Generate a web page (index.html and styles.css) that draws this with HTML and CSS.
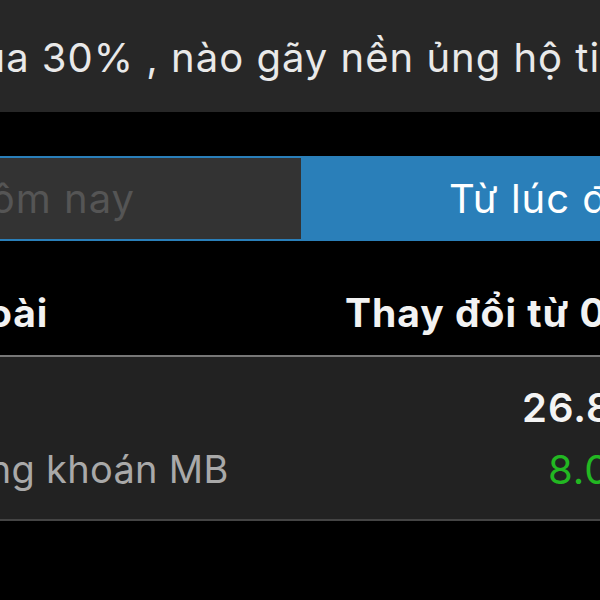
FILE: index.html
```html
<!DOCTYPE html>
<html>
<head>
  <title>Cổ phiếu</title>
  <link rel="stylesheet" href="styles.css">
</head>
<body>
  <div class="screen">
    <div class="notice">
      <span class="notice-text">qua 30% , nào gãy nền ủng hộ tiếp</span>
    </div>

    <div class="segments">
      <div class="segment segment-off"><span class="seg-text-left">Hôm nay</span></div>
      <div class="segment segment-on"><span class="seg-text-right">Từ lúc đầu</span></div>
    </div>

    <div class="table-head">
      <span class="head-left">ngoài</span>
      <span class="head-right">Thay đổi từ 0</span>
    </div>

    <div class="row">
      <div class="row-line">
        <span class="row-name"></span>
        <span class="row-value">26.800</span>
      </div>
      <div class="row-line">
        <span class="row-sub">Chứng khoán MB</span>
        <span class="row-change">8.000</span>
      </div>
    </div>
  </div>
</body>
</html>
```

FILE: styles.css
```css
/* Màn hình chi tiết cổ phiếu (dark mode) */

body {
  margin: 0;
  background-color: #000;
  font-family: Inter, "Noto Sans", sans-serif;
  letter-spacing: 1px;
  overflow: hidden;
}

.screen {
  width: 600px;
  height: 600px;
  overflow: hidden;
}

.notice {
  height: 112px;
  background-color: #272727;
  color: #e9e9e9;
  font-size: 40px;
  line-height: 116px;
  white-space: nowrap;
  overflow: hidden;
}

.notice-text {
  margin-left: -44px;
}

.segments {
  display: flex;
  margin-top: 44px;
  height: 81px;
  border-top: 2px solid #2a7fb9;
  border-bottom: 2px solid #2a7fb9;
  background-color: #2a7fb9;
  overflow: hidden;
}

.segment {
  font-size: 40px;
  line-height: 81px;
  white-space: nowrap;
  overflow: hidden;
}

.segment-off {
  width: 301px;
  background-color: #333333;
  color: #555555;
}

.segment-on {
  flex: 1;
  color: #ffffff;
}

.seg-text-left {
  margin-left: -40px;
}

.seg-text-right {
  margin-left: 148px;
}

.table-head {
  display: flex;
  height: 116px;
  align-items: flex-end;
  box-sizing: border-box;
  padding-bottom: 18px;
  border-bottom: 2px solid #777777;
  font-size: 39px;
  font-weight: 650;
  line-height: 48px;
  color: #f2f2f2;
  white-space: nowrap;
  overflow: hidden;
}

.head-left {
  margin-left: -63px;
  width: 408px;
  flex-shrink: 0;
}

.head-right {
  flex-shrink: 0;
}

.row {
  height: 162px;
  background-color: #222222;
  border-bottom: 2px solid #444444;
  display: flex;
  flex-direction: column;
  justify-content: center;
  gap: 14px;
  font-size: 40px;
  white-space: nowrap;
  overflow: hidden;
}

.row-line {
  display: flex;
  height: 48px;
  align-items: center;
}

.row-name {
  width: 522px;
  flex-shrink: 0;
}

.row-sub {
  margin-left: -86px;
  width: 634px;
  flex-shrink: 0;
  font-size: 38px;
  letter-spacing: 0.3px;
  color: #a9a9a9;
}

.row-value {
  font-weight: 600;
  color: #f4f4f4;
}

.row-change {
  color: #22b822;
}
```
